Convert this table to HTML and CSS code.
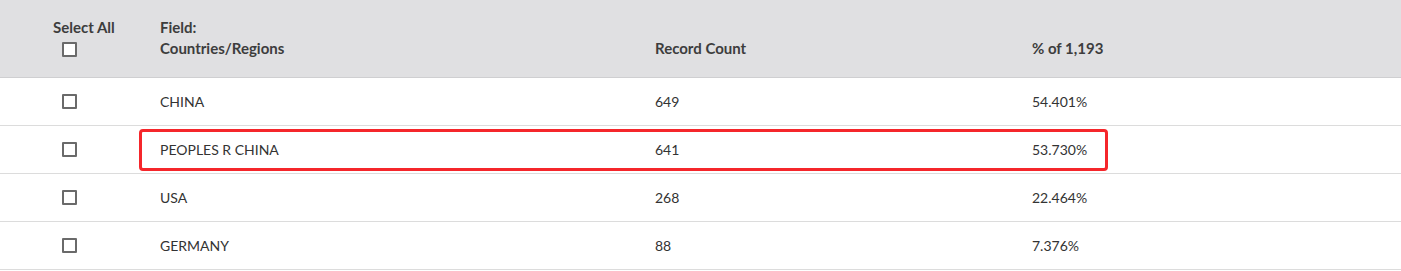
FILE: index.html
```html
<!DOCTYPE html>
<html lang="en">
<head>
<meta charset="utf-8">
<title>Countries/Regions</title>
<link rel="stylesheet" href="styles.css">
</head>
<body>
<div class="wrap">
  <table class="results">
    <colgroup>
      <col class="c-check">
      <col class="c-field">
      <col class="c-count">
      <col class="c-pct">
    </colgroup>
    <thead>
      <tr>
        <th class="th-select">
          <div class="select-all">
            <span class="sa-label">Select All</span>
            <span class="box"></span>
          </div>
        </th>
        <th><div>Field:</div><div>Countries/Regions</div></th>
        <th>Record Count</th>
        <th>% of 1,193</th>
      </tr>
    </thead>
    <tbody>
      <tr>
        <td class="td-check"><span class="box"></span></td>
        <td>CHINA</td>
        <td>649</td>
        <td>54.401%</td>
      </tr>
      <tr>
        <td class="td-check"><span class="box"></span></td>
        <td>PEOPLES R CHINA</td>
        <td>641</td>
        <td>53.730%</td>
      </tr>
      <tr>
        <td class="td-check"><span class="box"></span></td>
        <td>USA</td>
        <td>268</td>
        <td>22.464%</td>
      </tr>
      <tr>
        <td class="td-check"><span class="box"></span></td>
        <td>GERMANY</td>
        <td>88</td>
        <td>7.376%</td>
      </tr>
    </tbody>
  </table>
  <div class="highlight"></div>
</div>
</body>
</html>
```

FILE: styles.css
```css
html, body {
  margin: 0;
  padding: 0;
  background: #ffffff;
}

body {
  font-family: "Lato", "Liberation Sans", sans-serif;
  font-size: 14px;
  color: #333333;
}

.wrap {
  position: relative;
  width: 1401px;
}

.results {
  width: 100%;
  border-collapse: collapse;
  table-layout: fixed;
}

.c-check { width: 140px; }
.c-field { width: 495px; }
.c-count { width: 377px; }
.c-pct { width: auto; }

thead tr {
  background: #e0e0e2;
  height: 77px;
}

thead th {
  text-align: left;
  font-size: 15px;
  font-weight: 700;
  color: #3d3d3d;
  vertical-align: bottom;
  padding: 0 0 18px 20px;
  line-height: 21px;
  border-bottom: 1px solid #cfcfd1;
}

thead th.th-select {
  padding: 0 0 18px 53px;
  vertical-align: bottom;
}

.select-all {
  display: flex;
  flex-direction: column;
  align-items: flex-start;
}

.sa-label {
  line-height: 21px;
}

.select-all .box {
  margin: 4px 0 2px 9px;
}

.box {
  display: block;
  width: 11px;
  height: 11px;
  border: 2px solid #6a6a6a;
  border-radius: 1px;
  background: #ffffff;
}

tbody tr {
  height: 48px;
}

tbody td {
  padding: 0 0 0 20px;
  border-bottom: 1px solid #dcdcdc;
  vertical-align: middle;
  line-height: 21px;
}

tbody td.td-check {
  padding: 0 0 0 62px;
}

.highlight {
  position: absolute;
  left: 139px;
  top: 129px;
  width: 963px;
  height: 36px;
  border: 3px solid #f5262b;
  border-radius: 4px;
  pointer-events: none;
}
```
